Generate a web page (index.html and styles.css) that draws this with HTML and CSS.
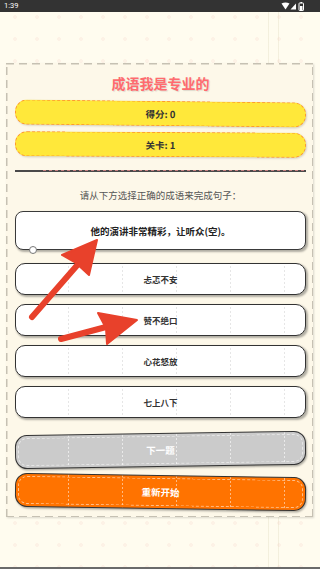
FILE: index.html
```html
<!DOCTYPE html>
<html lang="zh">
<head>
<meta charset="utf-8">
<link rel="stylesheet" href="styles.css">
</head>
<body>
<div class="screen">
  <div class="status">
    <span class="time">1:39</span>
    <span class="icons">
      <svg width="24" height="9" viewBox="0 0 24 9">
        <path d="M0.5 1.5 Q4.5 -0.5 8.5 1.5 L4.5 7.5 Z" fill="#fff"/>
        <path d="M9.5 7.5 L15 1.5 L15 7.5 Z" fill="#fff"/>
        <rect x="18" y="1" width="4.5" height="7.5" rx="0.6" fill="none" stroke="#fff" stroke-width="1"/>
        <rect x="19.5" y="0" width="1.5" height="1.2" fill="#fff"/>
        <rect x="19" y="4" width="2.5" height="4" fill="#fff"/>
      </svg>
    </span>
  </div>
  <div class="main">
    <div class="card">
      <h1 class="title">成语我是专业的</h1>
      <div class="pill">得分: 0</div>
      <div class="pill pill-b">关卡: 1</div>
      <div class="divider"></div>
      <p class="hint">请从下方选择正确的成语来完成句子：</p>
      <div class="question">他的演讲非常精彩，让听众(空)。<span class="dot"></span></div>
      <div class="options">
        <button class="opt">忐忑不安</button>
        <button class="opt">赞不绝口</button>
        <button class="opt">心花怒放</button>
        <button class="opt">七上八下</button>
      </div>
      <div class="actions">
        <button class="act next">下一题</button>
        <button class="act restart">重新开始</button>
      </div>
    </div>
    <svg class="arrows" width="320" height="569" viewBox="0 0 320 569">
      <line x1="32" y1="317" x2="80" y2="262" stroke="#e8412b" stroke-width="6" stroke-linecap="round"/>
      <polygon points="97,240 62,255 76,263 89,275" fill="#e8412b" stroke="#e8412b" stroke-width="2" stroke-linejoin="round"/>
      <line x1="61" y1="339" x2="106" y2="327" stroke="#e8412b" stroke-width="6" stroke-linecap="round"/>
      <polygon points="137,320 98,313 106,328 107,344" fill="#e8412b" stroke="#e8412b" stroke-width="2" stroke-linejoin="round"/>
    </svg>
  </div>
  <div class="navbar"></div>
</div>
</body>
</html>
```
FILE: styles.css
```css
* { box-sizing: border-box; }
html, body { margin: 0; padding: 0; }
body {
  width: 320px;
  height: 569px;
  overflow: hidden;
  font-family: "Noto Sans CJK SC", "Noto Sans", sans-serif;
  color: #333;
}
.screen {
  position: relative;
  width: 320px;
  height: 569px;
  display: flex;
  flex-direction: column;
  background-color: #fffcef;
  background-image:
    radial-gradient(circle, rgba(245, 205, 195, 0.22) 1.6px, transparent 2.2px),
    linear-gradient(90deg, transparent 268px, rgba(230, 225, 200, 0.45) 268px 269px, transparent 269px 278px, rgba(230, 225, 200, 0.45) 278px 279px, transparent 279px);
  background-size: 22px 22px, 320px 569px;
  background-position: 4px 6px, 0 0;
}
.status {
  height: 12px;
  background: #333;
  display: flex;
  align-items: center;
  justify-content: space-between;
  padding: 0 15px 0 4px;
  flex: none;
}
.time {
  color: #fff;
  font-family: "Roboto", "Liberation Sans", sans-serif;
  font-size: 7.5px;
  line-height: 12px;
}
.icons { display: flex; align-items: center; }
.icons svg { display: block; }
.main {
  flex: 1;
  padding: 51px 7px 0 6px;
}
.navbar {
  height: 2px;
  background: #6a6a6a;
  flex: none;
}
.card {
  background-color: #fdf8e9;
  background-image:
    repeating-linear-gradient(90deg, #c6c1b3 0 8px, transparent 8px 13px),
    repeating-linear-gradient(90deg, #c6c1b3 0 8px, transparent 8px 13px),
    repeating-linear-gradient(0deg, #c6c1b3 0 8px, transparent 8px 13px),
    repeating-linear-gradient(0deg, #c6c1b3 0 8px, transparent 8px 13px);
  background-size: 100% 1.5px, 100% 1.5px, 1.5px 100%, 1.5px 100%;
  background-position: 0 0, 0 100%, 0 0, 100% 0;
  background-repeat: no-repeat;
  box-shadow: 1px 1px 2px rgba(0, 0, 0, 0.15);
  padding: 10px 7px 8px 9px;
  display: flex;
  flex-direction: column;
}
.title {
  margin: 0;
  text-align: center;
  font-size: 14px;
  line-height: 20px;
  font-weight: 700;
  color: #fe6b6f;
  text-shadow: 1px 1px 1px rgba(0, 0, 0, 0.12);
}
.pill {
  margin-top: 8px;
  height: 25px;
  border: 1px dashed #ff9a2e;
  border-radius: 12px;
  background: #ffe83a;
  box-shadow: 1px 1px 2px rgba(0, 0, 0, 0.15);
  display: flex;
  align-items: center;
  justify-content: center;
  font-size: 9.5px;
  font-weight: 700;
  color: #333;
  transform: rotate(0.6deg);
}
.pill-b { margin-top: 6px; transform: rotate(0.3deg); }
.divider {
  position: relative;
  margin-top: 13px;
  height: 2px;
  background: #4a4a4a;
}
.divider::after {
  content: "";
  position: absolute;
  left: 28px;
  right: 0;
  top: 0;
  height: 1px;
  background: repeating-linear-gradient(90deg, #c58080 0 3px, transparent 3px 6px);
}
.hint {
  margin: 16px 0 0;
  text-align: center;
  font-size: 9.5px;
  line-height: 14px;
  color: #555;
}
.question {
  position: relative;
  margin-top: 9px;
  height: 39px;
  background: #fff;
  border: 1.5px solid #3a3a3a;
  border-radius: 8px;
  box-shadow: 1.5px 1.5px 2px rgba(0, 0, 0, 0.3);
  display: flex;
  align-items: center;
  justify-content: center;
  font-size: 9.5px;
  font-weight: 700;
  color: #222;
}
.dot {
  position: absolute;
  left: 13px;
  bottom: -5px;
  width: 8px;
  height: 8px;
  border-radius: 50%;
  background: #fff;
  border: 1px solid #777;
}
.options {
  margin-top: 13px;
  display: flex;
  flex-direction: column;
  gap: 9px;
}
.opt, .act {
  font-family: inherit;
  margin: 0;
  padding: 0;
  display: flex;
  align-items: center;
  justify-content: center;
  font-weight: 700;
  width: 100%;
}
.opt {
  height: 32px;
  border: 1.5px solid #333;
  border-radius: 10px;
  background:
    repeating-linear-gradient(0deg, #fff 0 2px, transparent 2px 4px),
    repeating-linear-gradient(90deg, transparent 0 52px, #e6e6e6 52px 53px, transparent 53px 54px),
    #fff;
  box-shadow: 1.5px 1.5px 2px rgba(0, 0, 0, 0.3);
  font-size: 8.5px;
  color: #333;
}
.actions {
  margin-top: 15px;
  display: flex;
  flex-direction: column;
  gap: 8px;
}
.act {
  height: 34px;
  border: 1.5px solid #333;
  border-radius: 12px;
  box-shadow: 1px 1.5px 2px rgba(0, 0, 0, 0.3);
  font-size: 9.5px;
  color: #fff;
  outline: 1px dashed rgba(255, 255, 255, 0.55);
  outline-offset: -4px;
}
.next {
  background:
    repeating-linear-gradient(0deg, #cbcbcb 0 2px, transparent 2px 4px),
    repeating-linear-gradient(90deg, transparent 0 52px, rgba(255,255,255,0.6) 52px 53px, transparent 53px 54px),
    #cbcbcb;
  transform: rotate(-0.9deg);
}
.restart {
  background:
    repeating-linear-gradient(0deg, #ff7300 0 2px, transparent 2px 4px),
    repeating-linear-gradient(90deg, transparent 0 52px, rgba(255,255,255,0.5) 52px 53px, transparent 53px 54px),
    #ff7300;
  transform: rotate(0.9deg);
}
.arrows {
  position: absolute;
  left: 0;
  top: 0;
  pointer-events: none;
}
```
